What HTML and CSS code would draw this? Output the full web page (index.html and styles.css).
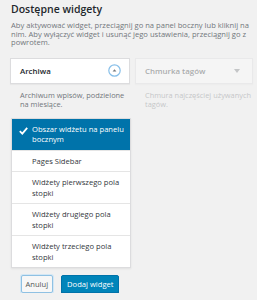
FILE: index.html
```html
<!DOCTYPE html>
<html>
<head>
    <title>Dostępne widgety</title>
    <link rel="stylesheet" href="styles.css">
</head>
<body>
    <div class="page">
        <h2 class="title">Dostępne widgety</h2>
        <p class="intro">Aby aktywować widget, przeciągnij go na panel boczny lub kliknij na nim. Aby wyłączyć widget i usunąć jego ustawienia, przeciągnij go z powrotem.</p>

        <div class="widgets">
            <div class="widget">
                <div class="widget-top">
                    <span class="widget-name">Archiwa</span>
                    <svg class="toggle" width="13" height="13" viewBox="0 0 13 13">
                        <circle cx="6.5" cy="6.5" r="5.7" fill="none" stroke="#87bfe9" stroke-width="1.2"/>
                        <path d="M4.6 7.6 L6.5 5.3 L8.4 7.6 Z" fill="#72777c"/>
                    </svg>
                </div>
                <p class="widget-desc">Archiwum wpisów, podzielone na miesiące.</p>

                <ul class="chooser">
                    <li class="selected">
                        <svg class="check" width="9" height="8" viewBox="0 0 9 8">
                            <path d="M0.8 4.2 L3.3 6.6 L8.2 0.9" fill="none" stroke="#fff" stroke-width="1.8"/>
                        </svg>
                        Obszar widżetu na panelu bocznym
                    </li>
                    <li>Pages Sidebar</li>
                    <li>Widżety pierwszego pola stopki</li>
                    <li>Widżety drugiego pola stopki</li>
                    <li>Widżety trzeciego pola stopki</li>
                </ul>

                <div class="actions">
                    <button class="btn btn-cancel">Anuluj</button>
                    <button class="btn btn-primary">Dodaj widget</button>
                </div>
            </div>

            <div class="widget faded">
                <div class="widget-top">
                    <span class="widget-name">Chmurka tagów</span>
                    <span class="arrow"></span>
                </div>
                <p class="widget-desc">Chmura najczęściej używanych tagów.</p>
            </div>
        </div>
    </div>
</body>
</html>
```

FILE: styles.css
```css
/* available widgets panel */
body {
    margin: 0;
    background: #f1f1f1;
    font-family: "Open Sans", "Liberation Sans", sans-serif;
    color: #444;
}

.page {
    padding: 2px 0 0 11px;
}

.title {
    margin: 0;
    font-size: 10.5px;
    line-height: 14px;
    font-weight: 600;
    color: #23282d;
}

.intro {
    margin: 5px 0 0;
    width: 242px;
    font-size: 7.6px;
    line-height: 8.6px;
    color: #72777c;
}

.widgets {
    display: flex;
    gap: 5px;
    margin: 11px 0 0 -1px;
}

.widget {
    width: 120px;
}

.widget.faded {
    width: 118px;
    opacity: 0.35;
}

.widget-top {
    display: flex;
    justify-content: space-between;
    align-items: center;
    height: 24px;
    padding: 0 9px 0 9px;
    background: #fff;
    border: 1px solid #dcdcde;
    box-shadow: 0 1px 1px rgba(0, 0, 0, 0.04);
}

.widget-name {
    font-size: 7.9px;
    font-weight: 600;
    color: #23282d;
}

.toggle {
    display: block;
    margin-right: -1px;
}

.arrow {
    width: 0;
    height: 0;
    border-left: 3px solid transparent;
    border-right: 3px solid transparent;
    border-top: 4px solid #72777c;
    margin-right: 3px;
}

.widget-desc {
    margin: 7px 0 0;
    padding: 0 2px 0 10px;
    font-size: 7.4px;
    line-height: 9px;
    color: #72777c;
}

.chooser {
    list-style: none;
    margin: 9px 0 0 1px;
    padding: 0;
    width: 118px;
    background: #fff;
    border: 1px solid #dcdcde;
    box-shadow: 0 1px 2px rgba(0, 0, 0, 0.07);
}

.chooser li {
    padding: 5px 1px 5px 20px;
    font-size: 7.6px;
    line-height: 10.5px;
    color: #32373c;
    border-top: 1px solid #e5e5e5;
}

.chooser li:first-child {
    border-top: 0;
}

.chooser li.selected {
    position: relative;
    background: #0073aa;
    color: #fff;
}

.check {
    position: absolute;
    left: 7px;
    top: 8px;
}

.actions {
    display: flex;
    justify-content: center;
    gap: 8px;
    margin-top: 7px;
}

.btn {
    height: 18px;
    padding: 0 5px;
    font-family: inherit;
    font-size: 7.6px;
    line-height: 16px;
    border-radius: 2px;
    cursor: pointer;
}

.btn-cancel {
    padding: 0 4px;
    background: #f7f7f7;
    border: 1px solid #8fc1e3;
    color: #555;
    box-shadow: 0 0 0 1px #d3e7f5;
}

.btn-primary {
    background: #0085ba;
    border: 1px solid #0073aa;
    color: #fff;
    box-shadow: 0 1px 0 #006799;
}
```
